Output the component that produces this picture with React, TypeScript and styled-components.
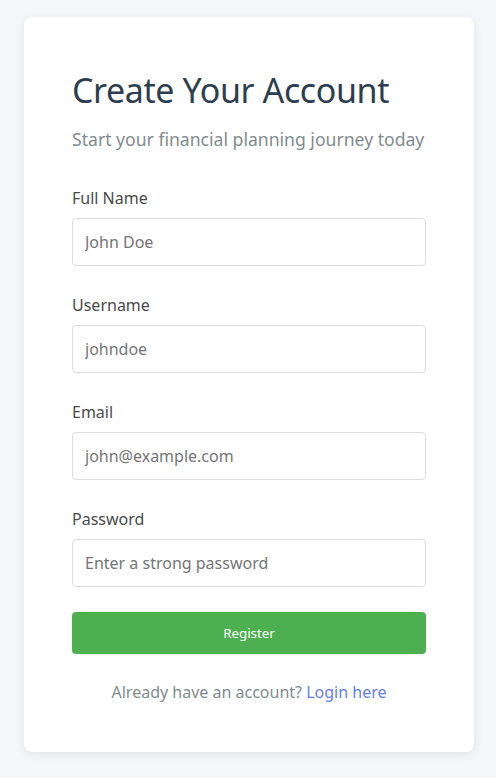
import React from "react";
import styled, { createGlobalStyle } from "styled-components";

const GlobalStyle = createGlobalStyle`
    html, body {
        margin: 0;
        background: #f5f6fa;
        font-family: "Noto Sans", "Open Sans", sans-serif;
    }
`;

const Page = styled.div`
    padding: 17px 22px 24px 24px;
`;

const Card = styled.div`
    width: 450px;
    box-sizing: border-box;
    background: #ffffff;
    border-radius: 8px;
    box-shadow: 0 2px 10px rgba(0, 0, 0, 0.08);
    padding: 48px 48px 49px;
`;

const Title = styled.h1`
    margin: 2px 0 0;
    font-size: 34px;
    font-weight: 400;
    letter-spacing: -0.4px;
    color: #2c3e50;
`;

const Subtitle = styled.p`
    margin: 14px 0 36px;
    font-size: 17.6px;
    color: #7f8c8d;
`;

const Form = styled.form`
    display: flex;
    flex-direction: column;
`;

const Field = styled.div`
    display: flex;
    flex-direction: column;
    margin-bottom: 28px;
`;

const Label = styled.label`
    font-size: 16px;
    color: #4a4a4a;
    margin-bottom: 9px;
`;

const Input = styled.input`
    font-family: inherit;
    font-size: 16px;
    padding: 12px;
    border: 1px solid #dddddd;
    border-radius: 4px;
    color: #2c3e50;
    outline: none;
    &::placeholder {
        color: #757575;
    }
`;

const SubmitButton = styled.button`
    font-family: inherit;
    font-size: 13.33px;
    padding: 12px;
    border: none;
    border-radius: 4px;
    background: #4caf50;
    color: #ffffff;
    margin-top: -3px;
    cursor: pointer;
`;

const Footer = styled.p`
    margin: 27px 0 0;
    text-align: center;
    font-size: 16px;
    color: #7f8c8d;
`;

const Link = styled.a`
    color: #667eea;
    text-decoration: none;
`;

const fields = [
    { label: "Full Name", type: "text", placeholder: "John Doe" },
    { label: "Username", type: "text", placeholder: "johndoe" },
    { label: "Email", type: "email", placeholder: "john@example.com" },
    { label: "Password", type: "password", placeholder: "Enter a strong password" },
];

export default function App() {
    return (
        <>
            <GlobalStyle />
            <Page>
                <Card>
                    <Title>Create Your Account</Title>
                    <Subtitle>Start your financial planning journey today</Subtitle>
                    <Form onSubmit={(e) => e.preventDefault()}>
                        {fields.map((f) => (
                            <Field key={f.label}>
                                <Label>{f.label}</Label>
                                <Input type={f.type} placeholder={f.placeholder} />
                            </Field>
                        ))}
                        <SubmitButton type="submit">Register</SubmitButton>
                    </Form>
                    <Footer>
                        Already have an account? <Link href="#">Login here</Link>
                    </Footer>
                </Card>
            </Page>
        </>
    );
}
